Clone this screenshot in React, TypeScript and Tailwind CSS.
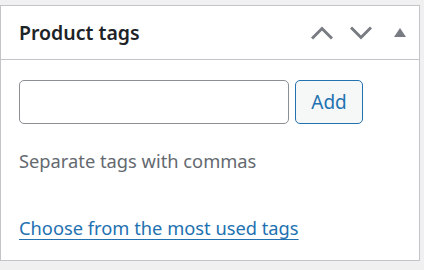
import React, { useState } from 'react';

const ChevronUp = () => (
  <svg width="22" height="14" viewBox="0 0 22 14" fill="none">
    <polyline points="1,12.5 11,2.5 21,12.5" stroke="#787c82" strokeWidth="3" />
  </svg>
);

const ChevronDown = () => (
  <svg width="22" height="14" viewBox="0 0 22 14" fill="none">
    <polyline points="1,1.5 11,11.5 21,1.5" stroke="#787c82" strokeWidth="3" />
  </svg>
);

const TriangleUp = () => (
  <svg width="12" height="9" viewBox="0 0 12 9">
    <polygon points="0,9 6,0 12,9" fill="#787c82" />
  </svg>
);

const App = () => {
  const [tag, setTag] = useState('');

  return (
    <div className="w-[424px] h-[270px] bg-[#f0f0f1] pt-[5px] font-['Noto_Sans',sans-serif]">
      <div className="w-[420px] h-[256px] bg-white border border-[#c3c4c7]">
        <div className="flex items-center h-[54px] border-b border-[#c3c4c7]">
          <h2 className="flex-1 pl-[18px] text-[19.5px] font-semibold text-[#1d2327] leading-none">
            Product tags
          </h2>
          <div className="flex h-full">
            <button className="w-[39px] h-full flex items-center justify-center">
              <ChevronUp />
            </button>
            <button className="w-[39px] h-full flex items-center justify-center">
              <ChevronDown />
            </button>
            <button className="w-[39px] h-full flex items-center justify-center">
              <TriangleUp />
            </button>
          </div>
        </div>
        <div className="px-[18px] pt-[20px]">
          <div className="flex gap-[6px]">
            <input
              type="text"
              value={tag}
              onChange={(e) => setTag(e.target.value)}
              className="w-[270px] h-[44px] border border-[#8c8f94] rounded-[5px] px-3 outline-none"
            />
            <button className="w-[68px] h-[44px] border border-[#2271b1] rounded-[5px] bg-[#f6f7f7] text-[#2271b1] text-[19px]">
              Add
            </button>
          </div>
          <p className="mt-[23px] text-[18.3px] leading-[27px] text-[#646970]">
            Separate tags with commas
          </p>
          <p className="mt-[40px] text-[18.3px] leading-[27px]">
            <a href="#" className="text-[#2271b1] underline underline-offset-[4px]">
              Choose from the most used tags
            </a>
          </p>
        </div>
      </div>
    </div>
  );
};

export default App;
